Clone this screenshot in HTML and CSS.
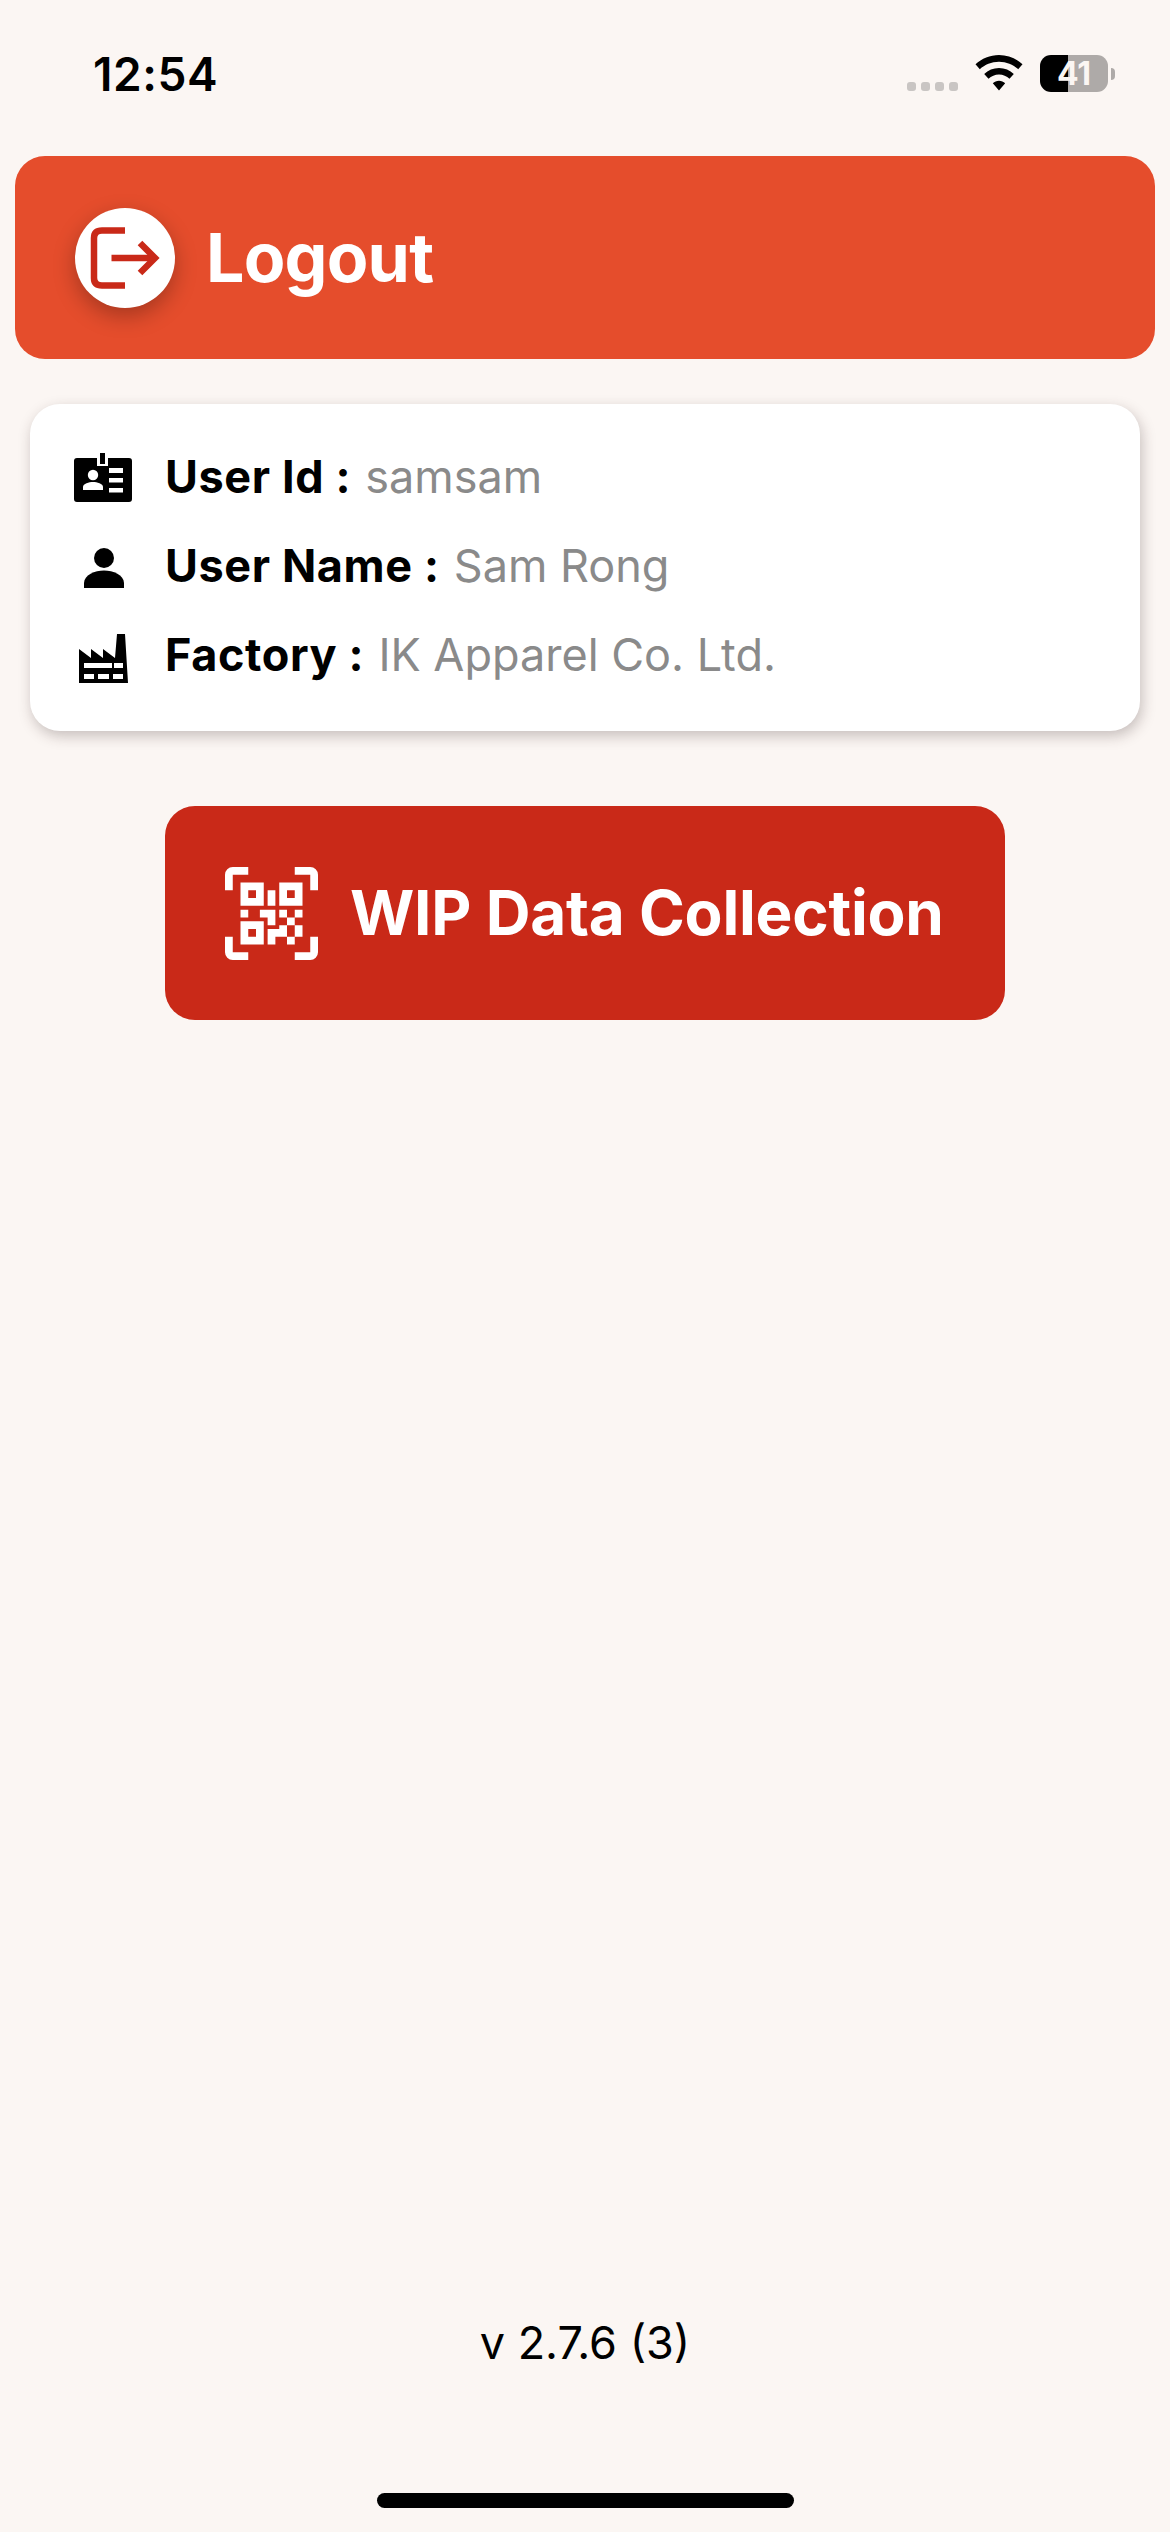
FILE: index.html
```html
<!DOCTYPE html>
<html lang="en">
<head>
<meta charset="utf-8">
<title>WIP Data Collection</title>
<link rel="stylesheet" href="styles.css">
</head>
<body>
<div class="status-bar">
  <span class="time">12:54</span>
  <div class="status-icons">
    <div class="signal"><i></i><i></i><i></i><i></i></div>
    <svg class="wifi" viewBox="0 0 48 36"><path d="M24 0C15 0 6.800 3.500 0.500 9.300L4.800 14.200C9.800 9.600 16.500 6.700 24 6.700S38.200 9.600 43.200 14.200L47.500 9.300C41.200 3.500 33 0 24 0ZM24 13C18.300 13 13.100 15.200 9.200 18.900L13.500 23.800C16.300 21.200 20 19.600 24 19.600S31.700 21.200 34.500 23.800L38.800 18.900C34.900 15.200 29.700 13 24 13ZM24 25.800C21.600 25.800 19.500 26.700 17.800 28.200L24 35.600L30.200 28.200C28.500 26.700 26.400 25.800 24 25.800Z"/></svg>
    <div class="battery">
      <div class="battery-body"><span>41</span></div>
      <div class="battery-nub"></div>
    </div>
  </div>
</div>

<main class="content">
  <header class="logout-bar">
    <div class="logout-circle">
      <svg class="logout-icon" viewBox="5 -8 100 100">
        <path class="logout-stroke" d="M55 14.500H32Q24 14.500 24 22V62Q24 69.500 32 69.500H55"/>
        <path class="logout-stroke" d="M41.500 42H84"/>
        <path class="logout-stroke" d="M70 27L85 42L70 57"/>
      </svg>
    </div>
    <span class="logout-label">Logout</span>
  </header>

  <section class="info-card">
    <div class="info-row">
      <span class="info-icon">
        <svg class="ic-badge" viewBox="0 0 70 60">
          <path d="M8 9H28V17H39V9H60Q63 9 63 12V50Q63 53 60 53H8Q5 53 5 50V12Q5 9 8 9Z"/>
          <rect x="31" y="4" width="5" height="11"/>
          <g class="ic-cut">
            <circle cx="24" cy="26" r="5.200"/>
            <path d="M14 41V38C14 34.500 20 33 24 33S34 34.500 34 38V41Z"/>
            <rect x="40" y="19" width="14" height="5"/>
            <rect x="40" y="29" width="14" height="4.500"/>
            <rect x="40" y="39" width="14" height="4.500"/>
          </g>
        </svg>
      </span>
      <p class="info-text"><b>User Id : </b><span>samsam</span></p>
    </div>
    <div class="info-row">
      <span class="info-icon">
        <svg class="ic-person" viewBox="0 0 40 40"><circle cx="20" cy="10" r="10"/><path d="M0 40V35C0 27 11 22.500 20 22.500S40 27 40 35V40Z"/></svg>
      </span>
      <p class="info-text"><b>User Name : </b><span>Sam Rong</span></p>
    </div>
    <div class="info-row">
      <span class="info-icon">
        <svg class="ic-factory" viewBox="0 0 70 60">
          <path fill-rule="evenodd" d="M10 22L22 31V22L34 31V22L46 31L48 7H56L59 56H10ZM15 36V41H43V36ZM45 36V41H54V36ZM15 47V52H25V47ZM29 47V52H40V47ZM44 47V52H54V47Z"/>
        </svg>
      </span>
      <p class="info-text"><b>Factory : </b><span>IK Apparel Co. Ltd.</span></p>
    </div>
  </section>

  <div class="wip-button">
    <svg class="qr-icon" viewBox="0 0 24 24"><path d="M4,4H10V10H4V4M20,4V10H14V4H20M14,15H16V13H14V11H16V13H18V11H20V13H18V15H20V18H18V20H16V18H13V20H11V16H14V15M16,15V18H18V15H16M4,20V14H10V20H4M6,6V8H8V6H6M16,6V8H18V6H16M6,16V18H8V16H6M4,11H6V13H4V11M9,11H13V15H11V13H9V11M11,6H13V10H11V6M2,2V6H0V2A2,2 0 0,1 2,0H6V2H2M22,0A2,2 0 0,1 24,2V6H22V2H18V0H22M2,18V22H6V24H2A2,2 0 0,1 0,22V18H2M22,22V18H24V22A2,2 0 0,1 22,24H18V22H22Z"/></svg>
    <span class="wip-label">WIP Data Collection</span>
  </div>
</main>

<footer class="footer">
  <p class="version">v 2.7.6 (3)</p>
  <div class="home-indicator"></div>
</footer>
</body>
</html>
```
FILE: styles.css
```css
* { box-sizing: border-box; }

html, body { margin: 0; padding: 0; }

body {
  width: 1170px;
  height: 2532px;
  display: flex;
  flex-direction: column;
  overflow: hidden;
  background: #fbf6f3;
  color: #000;
  font-family: Inter, "Liberation Sans", sans-serif;
}

p { margin: 0; }

/* status bar */
.status-bar {
  height: 156px;
  flex: none;
  display: flex;
  justify-content: space-between;
  align-items: flex-start;
  padding: 47px 55px 0 93px;
}

.time {
  font-size: 46px;
  line-height: 54px;
  font-weight: 600;
  letter-spacing: 0.6px;
}

.status-icons {
  display: flex;
  align-items: flex-start;
  padding-top: 8px;
}

.signal {
  display: flex;
  gap: 5px;
  margin-top: 27px;
}

.signal i {
  width: 9px;
  height: 9px;
  border-radius: 3px;
  background: #c9c5c3;
}

.wifi {
  width: 48px;
  height: 36px;
  margin-left: 17px;
  fill: #000;
}

.battery {
  display: flex;
  align-items: center;
  margin-left: 17px;
}

.battery-body {
  width: 68px;
  height: 37px;
  display: flex;
  align-items: center;
  justify-content: center;
  border-radius: 11px;
  background: linear-gradient(90deg, #000 0 28px, #aeaaa8 28px);
  color: #fbf6f3;
  font-size: 32px;
  line-height: 37px;
  font-weight: 700;
}

.battery-nub {
  width: 4px;
  height: 12px;
  margin-left: 3px;
  border-radius: 0 6px 6px 0;
  background: #aeaaa8;
}

/* main content */
.content {
  display: flex;
  flex-direction: column;
  padding: 0 15px;
}

.logout-bar {
  height: 203px;
  display: flex;
  align-items: center;
  gap: 31px;
  padding-left: 60px;
  border-radius: 30px;
  background: #e54d2c;
}

.logout-circle {
  width: 100px;
  height: 100px;
  flex: none;
  display: flex;
  border-radius: 50%;
  background: #fff;
  box-shadow: 0 8px 22px rgba(0, 0, 0, 0.28);
}

.logout-icon {
  width: 100px;
  height: 100px;
  flex: none;
  fill: none;
}

.logout-stroke {
  stroke: #c92918;
  stroke-width: 6.500px;
  fill: none;
}

.logout-label {
  color: #fff;
  font-size: 68px;
  line-height: 80px;
  padding-bottom: 2px;
  font-weight: 700;
  letter-spacing: -0.8px;
}

.info-card {
  margin: 45px 15px 0;
  padding: 30px 45px;
  border-radius: 30px;
  background: #fff;
  box-shadow: 2px 5px 14px rgba(60, 40, 40, 0.27);
}

.info-row {
  height: 89px;
  display: flex;
  align-items: center;
  gap: 32px;
}

.info-icon {
  width: 58px;
  height: 89px;
  flex: none;
  display: flex;
  align-items: center;
  justify-content: center;
}

.ic-badge, .ic-factory {
  width: 70px;
  height: 60px;
  flex: none;
  fill: #000;
}

.ic-cut { fill: #fff; }

.ic-person {
  width: 40px;
  height: 40px;
  flex: none;
  fill: #000;
}

.info-text {
  font-size: 45px;
  line-height: 54px;
  padding-bottom: 3px;
  white-space: pre;
  color: #8a8a8a;
}

.info-text b {
  font-weight: 700;
  letter-spacing: 0.6px;
  color: #000;
}

.info-text span { margin-left: 3px; }

.wip-button {
  width: 840px;
  height: 214px;
  margin: 75px auto 0;
  display: flex;
  align-items: center;
  gap: 32px;
  padding-left: 60px;
  border-radius: 30px;
  background: #c92918;
}

.qr-icon {
  width: 93px;
  height: 93px;
  flex: none;
  fill: #fff;
}

.wip-label {
  color: #fff;
  font-size: 62px;
  line-height: 74px;
  font-weight: 700;
  letter-spacing: -0.23px;
}

/* footer */
.footer {
  margin-top: auto;
  display: flex;
  flex-direction: column;
  align-items: center;
  padding-bottom: 24px;
}

.version {
  font-size: 45px;
  line-height: 54px;
  margin-bottom: 123px;
}

.home-indicator {
  width: 417px;
  height: 15px;
  border-radius: 8px;
  background: #000;
}
```
